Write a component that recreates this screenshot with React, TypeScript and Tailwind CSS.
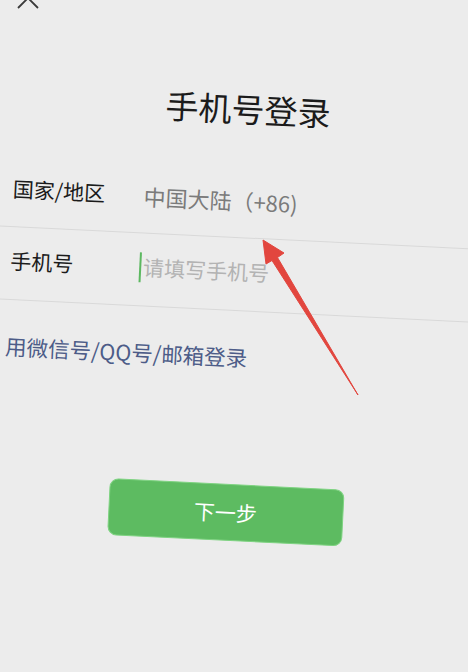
import React from 'react';

const font = { fontFamily: '"Noto Sans CJK SC", "Noto Sans", sans-serif' };

function CloseIcon() {
	return (
		<svg className="absolute left-[17px] top-[-13px]" width="22" height="22" viewBox="0 0 22 22">
			<path d="M1 1 L21 21 M21 1 L1 21" stroke="#3a3a3a" strokeWidth="1.8" fill="none" />
		</svg>
	);
}

function Arrow() {
	return (
		<svg className="absolute left-0 top-0 pointer-events-none" width="468" height="672" viewBox="0 0 468 672">
			<polygon
				points="263,240 284,253 277.5,257.5 358,395 272,260.5 266,264"
				fill="#e2463e"
				stroke="#e2463e"
				strokeWidth="1"
				strokeLinejoin="round"
			/>
		</svg>
	);
}

const App = () => {
	return (
		<div className="relative w-[468px] h-[672px] overflow-hidden bg-[#ececec]" style={font}>
			<div className="w-[508px] h-[672px] -ml-[20px] rotate-[2.8deg] flex flex-col">
				<section className="pt-[86px] h-[130px] pl-[6px] text-center text-[33px] leading-[44px] text-[#1b1b1b]">
					手机号登录
				</section>

				<section className="mt-[33px] h-[75px] flex items-center border-b border-[#d9d9d9] pl-[26px]">
					<span className="w-[131px] text-[21px] text-[#1b1b1b]">国家/地区</span>
					<span className="text-[22px] text-[#7b7b7b]">中国大陆（+86)</span>
				</section>

				<section className="h-[73px] flex items-center pb-[5px] border-b border-[#d9d9d9] pl-[27px]">
					<span className="w-[129px] text-[21px] text-[#1b1b1b]">手机号</span>
					<span className="w-[2px] h-[30px] bg-[#5cb860]" />
					<span className="ml-[2px] text-[21px] text-[#b3b3b3]">请填写手机号</span>
				</section>

				<section className="mt-[32px] pl-[26px] text-[21.5px] leading-[28px] text-[#4d5c88]">
					用微信号/QQ号/邮箱登录
				</section>

				<section className="mt-[113px] flex justify-center">
					<button className="w-[235px] h-[57px] rounded-[9px] bg-[#5dbb61] border border-[#7fd382] text-white text-[21px]">
						下一步
					</button>
				</section>
			</div>
			<CloseIcon />
			<Arrow />
		</div>
	);
};

export default App;
